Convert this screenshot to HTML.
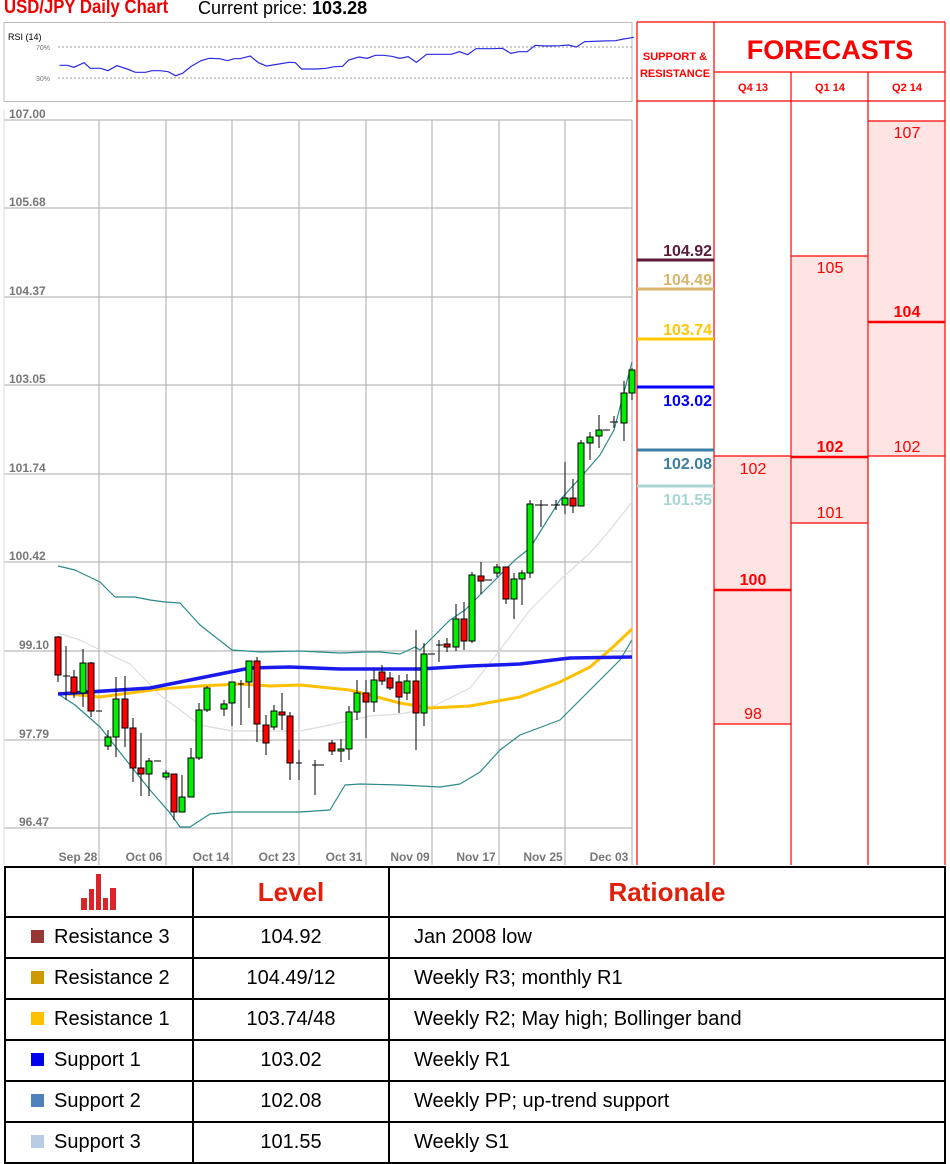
<!DOCTYPE html>
<html><head><meta charset="utf-8"><style>
body{margin:0;width:950px;height:1164px;background:#fff;position:relative;overflow:hidden;font-family:"Liberation Sans",sans-serif}
.t{position:absolute;white-space:nowrap}
table{position:absolute;left:4px;top:866px;width:942px;border-collapse:collapse}
td{border:2px solid #000;font-size:20px;color:#000;padding:0}
tr{height:41px}
</style></head><body>
<div class="t" style="left:4px;top:-3px;font-size:19px;color:#e00;font-weight:bold;transform:scaleX(0.88);transform-origin:left">USD/JPY Daily Chart</div>
<div class="t" style="left:198px;top:-2px;font-size:18px;color:#000">Current price: <b>103.28</b></div>

<svg style="position:absolute;left:0;top:0" width="950" height="870">
<rect x="4" y="22.5" width="628" height="79" fill="#fff" stroke="#bbb"/>
<text x="8" y="40" font-size="9" fill="#000">RSI (14)</text>
<text x="36" y="50" font-size="7" fill="#777">70%</text>
<text x="36" y="81" font-size="7" fill="#777">30%</text>
<line x1="58" y1="47" x2="632" y2="47" stroke="#777" stroke-dasharray="2,2" stroke-width="0.8"/>
<line x1="58" y1="78" x2="632" y2="78" stroke="#777" stroke-dasharray="2,2" stroke-width="0.8"/>
<svg x="0" y="0" width="640" height="120" viewBox="0 0 1560 360" preserveAspectRatio="none">
<polyline vector-effect="non-scaling-stroke" fill="none" stroke="#2a2ae0" stroke-width="1.2" points="145,196 165,196 180,202 205,188 220,205 245,205 263,212 285,197 310,207 330,217 355,217 370,212 390,212 410,215 428,227 445,220 465,200 490,182 510,175 535,176 555,182 570,176 585,176 610,168 630,188 650,198 680,192 705,187 720,188 735,207 770,207 795,205 815,200 835,199 850,180 875,171 895,175 915,166 935,166 955,169 975,175 995,170 1015,187 1040,163 1100,163 1120,155 1140,164 1160,146 1200,146 1225,145 1245,160 1265,155 1285,155 1305,136 1330,138 1365,137 1385,135 1405,141 1425,125 1470,123 1500,122 1520,117 1545,112"/>
</svg>
<g stroke="#aaa" stroke-width="1">
<line x1="4" y1="120" x2="632" y2="120"/>
<line x1="4" y1="208" x2="632" y2="208"/>
<line x1="4" y1="297" x2="632" y2="297"/>
<line x1="4" y1="385" x2="632" y2="385"/>
<line x1="4" y1="474" x2="632" y2="474"/>
<line x1="4" y1="562" x2="632" y2="562"/>
<line x1="4" y1="651" x2="632" y2="651"/>
<line x1="4" y1="740" x2="632" y2="740"/>
<line x1="4" y1="828" x2="632" y2="828"/>
<line x1="99" y1="120" x2="99" y2="865"/>
<line x1="166" y1="120" x2="166" y2="865"/>
<line x1="232" y1="120" x2="232" y2="865"/>
<line x1="299" y1="120" x2="299" y2="865"/>
<line x1="366" y1="120" x2="366" y2="865"/>
<line x1="432" y1="120" x2="432" y2="865"/>
<line x1="499" y1="120" x2="499" y2="865"/>
<line x1="565" y1="120" x2="565" y2="865"/>
<line x1="632" y1="120" x2="632" y2="865"/>
<line x1="4" y1="110" x2="4" y2="865" stroke="#ddd"/>
</g>
<g font-size="12" font-weight="bold" fill="#777">
<text x="9" y="118">107.00</text><text x="9" y="206">105.68</text><text x="9" y="295">104.37</text>
<text x="9" y="383">103.05</text><text x="9" y="472">101.74</text><text x="9" y="560">100.42</text>
<text x="19" y="649">99.10</text><text x="19" y="738">97.79</text><text x="19" y="826">96.47</text>
<g text-anchor="middle"><text x="78" y="861">Sep 28</text><text x="144" y="861">Oct 06</text><text x="211" y="861">Oct 14</text><text x="277" y="861">Oct 23</text><text x="344" y="861">Oct 31</text><text x="410" y="861">Nov 09</text><text x="476" y="861">Nov 17</text><text x="543" y="861">Nov 25</text><text x="609" y="861">Dec 03</text></g>
</g>
<g fill="none" stroke-linejoin="round">
<polyline stroke="#ddd" stroke-width="1.2" points="58,633 80,640 100,650 130,664 160,695 200,725 232,731 300,731 330,725 370,716 400,714 430,708 470,688 500,650 530,610 560,580 590,553 610,530 632,502"/>
<polyline stroke="#2a8a8a" stroke-width="1.2" points="58,566 75,570 100,582 115,597 135,597 150,600 165,602 180,603 200,625 232,650 260,652 299,651 340,653 365,652 380,652 400,654 415,647 420,650 430,640 450,620 465,610 480,595 500,575 515,560 530,548 545,524 560,500 580,478 600,455 614,430 632,362"/>
<polyline stroke="#2a8a8a" stroke-width="1.2" points="58,694 75,705 100,727 130,765 150,790 170,813 180,827 190,827 210,814 232,812 260,812 300,812 330,810 345,785 360,784 400,785 440,787 460,784 480,772 500,750 520,735 560,720 600,680 620,660 632,640"/>
<polyline stroke="#ffc000" stroke-width="3" points="58,693 100,697 160,689 200,686 240,684 270,686 300,685 350,690 400,703 430,708 470,706 520,697 560,682 590,667 612,648 632,629"/>
<polyline stroke="#1a1aee" stroke-width="3.5" points="58,694 150,688 250,668 290,667 340,669 420,669 470,666 520,664 570,658 632,657"/>
</g>
<g stroke="#000" stroke-width="1">
<line x1="58" y1="636" x2="58" y2="682"/><rect x="55" y="637" width="6" height="38" fill="#f00"/>
<line x1="66" y1="646" x2="66" y2="700"/><line x1="63" y1="676" x2="70" y2="676"/>
<line x1="74" y1="670" x2="74" y2="698"/><rect x="71" y="677" width="6" height="16" fill="#f00"/>
<line x1="83" y1="649" x2="83" y2="707"/><rect x="80" y="663" width="6" height="30" fill="#0e0"/>
<line x1="91" y1="662" x2="91" y2="717"/><rect x="88" y="663" width="6" height="48" fill="#f00"/>
<line x1="96" y1="711" x2="102" y2="711"/>
<line x1="108" y1="730" x2="108" y2="750"/><rect x="105" y="737" width="6" height="9" fill="#0e0"/>
<line x1="116" y1="677" x2="116" y2="757"/><rect x="113" y="699" width="6" height="38" fill="#0e0"/>
<line x1="125" y1="676" x2="125" y2="747"/><rect x="122" y="699" width="6" height="29" fill="#f00"/>
<line x1="133" y1="718" x2="133" y2="782"/><rect x="130" y="728" width="6" height="40" fill="#f00"/>
<line x1="141" y1="733" x2="141" y2="796"/><rect x="138" y="768" width="6" height="6" fill="#f00"/>
<line x1="149" y1="758" x2="149" y2="796"/><rect x="146" y="761" width="6" height="13" fill="#0e0"/>
<line x1="154" y1="761" x2="161" y2="761"/>
<line x1="166" y1="770" x2="166" y2="780"/><rect x="163" y="773" width="6" height="4" fill="#0e0"/>
<line x1="174" y1="774" x2="174" y2="820"/><rect x="171" y="774" width="6" height="38" fill="#f00"/>
<line x1="182" y1="775" x2="182" y2="812"/><rect x="179" y="797" width="6" height="15" fill="#0e0"/>
<line x1="191" y1="748" x2="191" y2="797"/><rect x="188" y="758" width="6" height="39" fill="#0e0"/>
<line x1="199" y1="703" x2="199" y2="760"/><rect x="196" y="710" width="6" height="48" fill="#0e0"/>
<line x1="207" y1="686" x2="207" y2="712"/><rect x="204" y="688" width="6" height="22" fill="#0e0"/>
<line x1="224" y1="700" x2="224" y2="716"/><rect x="221" y="704" width="6" height="5" fill="#0e0"/>
<line x1="232" y1="682" x2="232" y2="726"/><rect x="229" y="682" width="6" height="21" fill="#0e0"/>
<line x1="241" y1="680" x2="241" y2="725"/><line x1="238" y1="684" x2="244" y2="684"/>
<line x1="249" y1="661" x2="249" y2="708"/><rect x="246" y="661" width="6" height="21" fill="#0e0"/>
<line x1="257" y1="657" x2="257" y2="742"/><rect x="254" y="661" width="6" height="63" fill="#f00"/>
<line x1="266" y1="715" x2="266" y2="755"/><rect x="263" y="725" width="6" height="18" fill="#f00"/>
<line x1="274" y1="705" x2="274" y2="730"/><rect x="271" y="711" width="6" height="16" fill="#0e0"/>
<line x1="282" y1="693" x2="282" y2="730"/><rect x="279" y="712" width="6" height="3" fill="#f00"/>
<line x1="290" y1="712" x2="290" y2="780"/><rect x="287" y="716" width="6" height="47" fill="#f00"/>
<line x1="299" y1="750" x2="299" y2="780"/><line x1="296" y1="763" x2="302" y2="763"/>
<line x1="315" y1="760" x2="315" y2="795"/><line x1="312" y1="765" x2="324" y2="765"/>
<line x1="332" y1="740" x2="332" y2="755"/><rect x="329" y="743" width="6" height="8" fill="#f00"/>
<line x1="341" y1="739" x2="341" y2="762"/><rect x="338" y="749" width="6" height="2" fill="#0e0"/>
<line x1="349" y1="706" x2="349" y2="760"/><rect x="346" y="712" width="6" height="37" fill="#0e0"/>
<line x1="357" y1="680" x2="357" y2="720"/><rect x="354" y="693" width="6" height="19" fill="#0e0"/>
<line x1="366" y1="680" x2="366" y2="738"/><rect x="363" y="693" width="6" height="9" fill="#f00"/>
<line x1="374" y1="670" x2="374" y2="712"/><rect x="371" y="680" width="6" height="22" fill="#0e0"/>
<line x1="382" y1="665" x2="382" y2="685"/><rect x="379" y="672" width="6" height="9" fill="#f00"/>
<line x1="390" y1="672" x2="390" y2="690"/><rect x="387" y="678" width="6" height="10" fill="#f00"/>
<line x1="399" y1="675" x2="399" y2="713"/><rect x="396" y="682" width="6" height="15" fill="#f00"/>
<line x1="407" y1="674" x2="407" y2="700"/><rect x="404" y="681" width="6" height="12" fill="#0e0"/>
<line x1="416" y1="630" x2="416" y2="750"/><rect x="413" y="681" width="6" height="32" fill="#f00"/>
<line x1="424" y1="643" x2="424" y2="726"/><rect x="421" y="654" width="6" height="59" fill="#0e0"/>
<line x1="428" y1="654" x2="435" y2="654"/>
<line x1="439" y1="640" x2="439" y2="662"/><line x1="436" y1="645" x2="443" y2="645"/>
<line x1="447" y1="638" x2="447" y2="652"/><rect x="444" y="644" width="6" height="3" fill="#f00"/>
<line x1="456" y1="604" x2="456" y2="651"/><rect x="453" y="619" width="6" height="28" fill="#0e0"/>
<line x1="464" y1="602" x2="464" y2="650"/><rect x="461" y="619" width="6" height="22" fill="#f00"/>
<line x1="472" y1="572" x2="472" y2="643"/><rect x="469" y="575" width="6" height="66" fill="#0e0"/>
<line x1="481" y1="562" x2="481" y2="594"/><rect x="478" y="576" width="6" height="5" fill="#f00"/>
<line x1="485" y1="580" x2="492" y2="580"/>
<line x1="497" y1="564" x2="497" y2="577"/><rect x="494" y="567" width="6" height="6" fill="#0e0"/>
<line x1="506" y1="567" x2="506" y2="604"/><rect x="503" y="567" width="6" height="32" fill="#f00"/>
<line x1="514" y1="573" x2="514" y2="619"/><rect x="511" y="579" width="6" height="20" fill="#0e0"/>
<line x1="522" y1="570" x2="522" y2="605"/><rect x="519" y="573" width="6" height="6" fill="#0e0"/>
<line x1="530" y1="500" x2="530" y2="578"/><rect x="527" y="504" width="6" height="69" fill="#0e0"/>
<line x1="535" y1="505" x2="548" y2="505"/><line x1="541" y1="500" x2="541" y2="527"/>
<line x1="551" y1="505" x2="560" y2="505"/><line x1="556" y1="500" x2="556" y2="510"/>
<line x1="565" y1="462" x2="565" y2="514"/><rect x="562" y="498" width="6" height="7" fill="#0e0"/>
<line x1="573" y1="479" x2="573" y2="513"/><rect x="570" y="498" width="6" height="8" fill="#f00"/>
<line x1="581" y1="440" x2="581" y2="506"/><rect x="578" y="443" width="6" height="63" fill="#0e0"/>
<line x1="590" y1="432" x2="590" y2="460"/><rect x="587" y="437" width="6" height="6" fill="#0e0"/>
<line x1="599" y1="415" x2="599" y2="448"/><rect x="596" y="430" width="6" height="6" fill="#0e0"/>
<line x1="603" y1="430" x2="610" y2="430"/>
<line x1="614" y1="416" x2="614" y2="428"/><line x1="610" y1="422" x2="618" y2="422"/>
<line x1="624" y1="381" x2="624" y2="441"/><rect x="621" y="393" width="6" height="30" fill="#0e0"/>
<line x1="632" y1="368" x2="632" y2="400"/><rect x="629" y="370" width="6" height="23" fill="#0e0"/>
</g>

<rect x="792" y="256" width="76" height="267" fill="#ffe4e4"/>
<rect x="869" y="121" width="76" height="335" fill="#ffe4e4"/>
<rect x="715" y="456" width="76" height="268" fill="#ffe4e4"/>
<g stroke="#f00" stroke-width="1.2" fill="none">
<line x1="637" y1="22" x2="637" y2="865"/>
<line x1="714" y1="22" x2="714" y2="865"/>
<line x1="791" y1="72" x2="791" y2="865"/>
<line x1="868" y1="72" x2="868" y2="865"/>
<line x1="945" y1="22" x2="945" y2="865"/>
<line x1="637" y1="22" x2="945" y2="22"/>
<line x1="714" y1="72" x2="945" y2="72"/>
<line x1="637" y1="101" x2="945" y2="101"/>
<line x1="868" y1="121" x2="945" y2="121"/>
<line x1="868" y1="456" x2="945" y2="456"/>
<line x1="791" y1="256" x2="868" y2="256"/>
<line x1="791" y1="523" x2="868" y2="523"/>
<line x1="714" y1="456" x2="791" y2="456"/>
<line x1="714" y1="724" x2="791" y2="724"/>
<line x1="714" y1="590" x2="791" y2="590" stroke-width="2.5"/>
<line x1="791" y1="457" x2="868" y2="457" stroke-width="2.5"/>
<line x1="868" y1="322" x2="945" y2="322" stroke-width="2.5"/>
</g>
<g stroke-width="3">
<line x1="637" y1="260" x2="714" y2="260" stroke="#5a1a3a"/>
<line x1="637" y1="289" x2="714" y2="289" stroke="#d9b56a"/>
<line x1="637" y1="339" x2="714" y2="339" stroke="#ffc800"/>
<line x1="637" y1="387" x2="714" y2="387" stroke="#0000ff"/>
<line x1="637" y1="450" x2="714" y2="450" stroke="#3a7ea1"/>
<line x1="637" y1="486" x2="714" y2="486" stroke="#a8d4d4"/>
</g>
<g font-weight="bold" font-size="16" text-anchor="end">
<text x="712" y="256" fill="#5a1a3a">104.92</text>
<text x="712" y="285" fill="#d9b56a">104.49</text>
<text x="712" y="335" fill="#ffc800">103.74</text>
<text x="712" y="406" fill="#0000ff">103.02</text>
<text x="712" y="469" fill="#3a7ea1">102.08</text>
<text x="712" y="505" fill="#a8d4d4">101.55</text>
</g>
<g fill="#f00" text-anchor="middle" font-size="16">
<text x="753" y="474">102</text><text x="753" y="585" font-weight="bold">100</text><text x="753" y="719">98</text>
<text x="830" y="273">105</text><text x="830" y="452" font-weight="bold">102</text><text x="830" y="518">101</text>
<text x="907" y="138">107</text><text x="907" y="317" font-weight="bold">104</text><text x="907" y="452">102</text>
</g>
<g fill="#f00" font-weight="bold" text-anchor="middle">
<text x="675" y="60" font-size="11">SUPPORT &amp;</text>
<text x="675" y="77" font-size="11">RESISTANCE</text>
<text x="830" y="59" font-size="27">FORECASTS</text>
<text x="753" y="91" font-size="11">Q4 13</text>
<text x="830" y="91" font-size="11">Q1 14</text>
<text x="907" y="91" font-size="11">Q2 14</text>
</g>
</svg>

<table>
<tr style="height:50px"><td style="width:186px;text-align:center">
<svg width="36" height="36" viewBox="0 0 36 36" style="vertical-align:middle"><g fill="#d9242a"><rect x="0" y="24" width="6" height="12"/><rect x="8" y="15" width="5" height="21"/><rect x="15" y="0" width="5" height="36"/><rect x="22" y="24" width="5" height="12"/><rect x="29" y="14" width="6" height="22"/></g></svg></td>
<td style="width:194px;text-align:center;font-size:26px;font-weight:bold;color:#e0200a">Level</td>
<td style="text-align:center;font-size:26px;font-weight:bold;color:#e0200a">Rationale</td></tr>
<tr><td><span style="display:inline-block;width:13px;height:13px;background:#953735;margin:0 10px 0 25px"></span>Resistance 3</td><td style="text-align:center">104.92</td><td style="padding-left:24px">Jan 2008 low</td></tr>
<tr><td><span style="display:inline-block;width:13px;height:13px;background:#cc9900;margin:0 10px 0 25px"></span>Resistance 2</td><td style="text-align:center">104.49/12</td><td style="padding-left:24px">Weekly R3; monthly R1</td></tr>
<tr><td><span style="display:inline-block;width:13px;height:13px;background:#ffc000;margin:0 10px 0 25px"></span>Resistance 1</td><td style="text-align:center">103.74/48</td><td style="padding-left:24px">Weekly R2; May high; Bollinger band</td></tr>
<tr><td><span style="display:inline-block;width:13px;height:13px;background:#0000ee;margin:0 10px 0 25px"></span>Support 1</td><td style="text-align:center">103.02</td><td style="padding-left:24px">Weekly R1</td></tr>
<tr><td><span style="display:inline-block;width:13px;height:13px;background:#4f81bd;margin:0 10px 0 25px"></span>Support 2</td><td style="text-align:center">102.08</td><td style="padding-left:24px">Weekly PP; up-trend support</td></tr>
<tr><td><span style="display:inline-block;width:13px;height:13px;background:#b8cce4;margin:0 10px 0 25px"></span>Support 3</td><td style="text-align:center">101.55</td><td style="padding-left:24px">Weekly S1</td></tr>
</table>
</body></html>
